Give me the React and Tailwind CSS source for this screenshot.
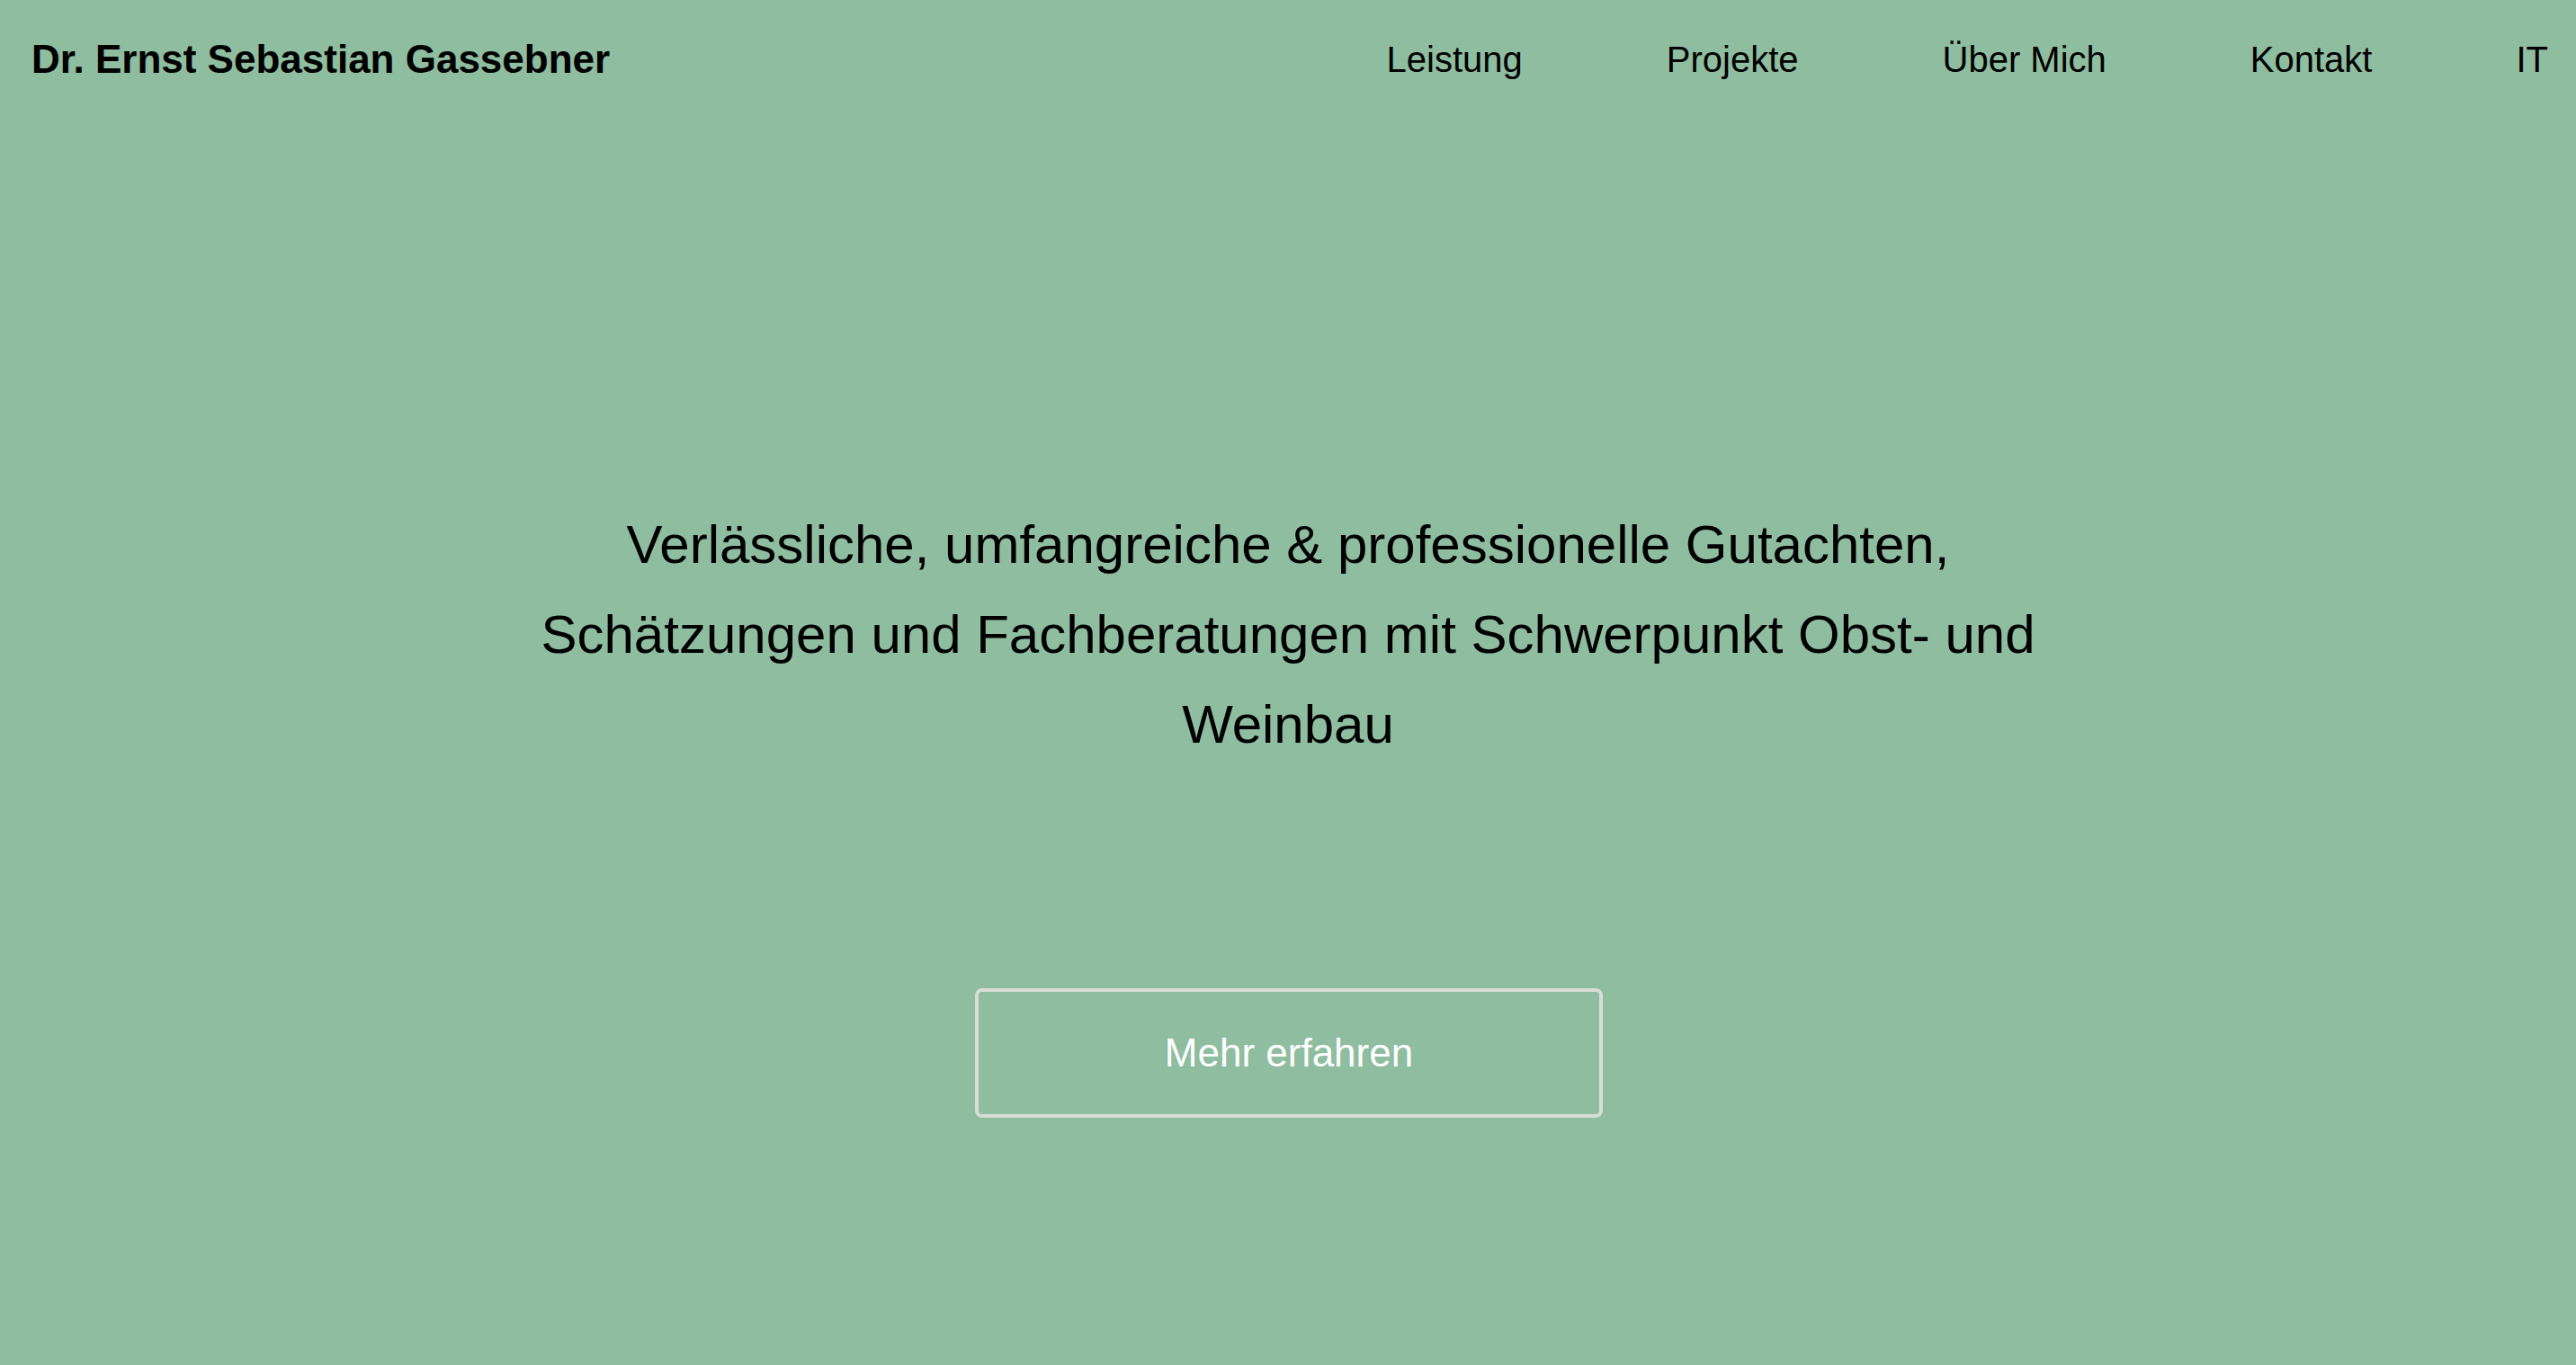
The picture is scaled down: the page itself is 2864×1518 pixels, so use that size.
import React from 'react';

const navItems = ['Leistung', 'Projekte', 'Über Mich', 'Kontakt', 'IT'];

const App = () => {
  return (
    <div className="min-h-[1518px] w-full bg-[#8ebd9f] text-black font-['Liberation_Sans',Arial,sans-serif]">
      <header className="flex h-[131px] items-center justify-between pl-[35px] pr-[31px]">
        <div className="text-[44px] font-bold leading-none">Dr. Ernst Sebastian Gassebner</div>
        <nav className="flex gap-[160px] text-[40px] leading-none">
          {navItems.map(item => (
            <a key={item} href="#" className="text-black">
              {item}
            </a>
          ))}
        </nav>
      </header>

      <main className="flex flex-col items-center">
        <h1 className="mt-[425px] max-w-[1720px] text-center text-[60px] font-normal leading-[100px]">
          Verlässliche, umfangreiche &amp; professionelle Gutachten, Schätzungen und Fachberatungen mit Schwerpunkt Obst- und Weinbau
        </h1>
        <button className="ml-[2px] mt-[243px] flex h-[144px] w-[698px] items-center justify-center rounded-[8px] border-4 border-[#d8ddd9] text-[44px] text-white">
          Mehr erfahren
        </button>
      </main>
    </div>
  );
};

export default App;
